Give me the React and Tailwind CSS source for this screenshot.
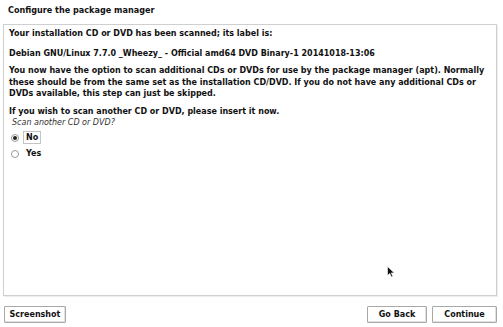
import React, { useState } from "react";

const font = { fontFamily: '"DejaVu Sans", Verdana, sans-serif' };

function Radio({ checked, label, focused, onClick }) {
  return (
    <div className="flex items-center gap-[4px] h-[16px] cursor-default" onClick={onClick}>
      <span className="w-[8px] h-[8px] rounded-full border border-[#9a9a9a] bg-white flex items-center justify-center">
        {checked && <span className="w-[4px] h-[4px] rounded-full bg-[#222]" />}
      </span>
      <span
        className={
          "px-[2px] leading-[11px] " +
          (focused ? "border border-[#c4c4c4]" : "border border-transparent")
        }
      >
        {label}
      </span>
    </div>
  );
}

function Btn({ children, className = "" }) {
  return (
    <button
      className={
        "h-[17px] border border-[#a8a8a8] bg-white rounded-[1px] font-bold text-[8px] text-[#111] shadow-[inset_-1px_-1px_0_#e2e2e2] " +
        className
      }
    >
      {children}
    </button>
  );
}

export default function App() {
  const [scan, setScan] = useState("no");

  return (
    <div className="relative w-[503px] h-[327px] bg-white text-[#111] flex flex-col overflow-hidden" style={font}>
      {/* title */}
      <div className="h-[24px] pl-[8px] pt-[5px] font-bold text-[8.1px] leading-[10px]">
        Configure the package manager
      </div>

      {/* panel */}
      <div className="mx-[3px] w-[494px] h-[272px] border border-[#cfcfcf] shadow-[1px_1px_0_#ececec] px-[5px] pt-[3px] font-bold text-[8px] leading-[11px]">
        <p>Your installation CD or DVD has been scanned; its label is:</p>
        <p className="mt-[9px]">Debian GNU/Linux 7.7.0 _Wheezy_ - Official amd64 DVD Binary-1 20141018-13:06</p>
        <p className="mt-[6px] leading-[11.5px]">
          You now have the option to scan additional CDs or DVDs for use by the package manager (apt). Normally
          these should be from the same set as the installation CD/DVD. If you do not have any additional CDs or
          DVDs available, this step can just be skipped.
        </p>
        <p className="mt-[6px]">If you wish to scan another CD or DVD, please insert it now.</p>
        <p className="pl-[3px] italic font-normal text-[#333]">Scan another CD or DVD?</p>
        <div className="mt-[2px] pl-[2px] flex flex-col">
          <Radio checked={scan === "no"} focused label="No" onClick={() => setScan("no")} />
          <Radio checked={scan === "yes"} label="Yes" onClick={() => setScan("yes")} />
        </div>
      </div>

      {/* footer */}
      <div className="flex items-center px-[4px] pt-[10px]">
        <Btn className="w-[62px]">Screenshot</Btn>
        <div className="flex-1" />
        <Btn className="w-[60px] mr-[5px]">Go Back</Btn>
        <Btn className="w-[65px] mr-[2px]">Continue</Btn>
      </div>

      {/* mouse pointer */}
      <svg className="absolute left-[387px] top-[266px]" width="8" height="12" viewBox="0 0 8 12">
        <path d="M0.5 0.5 L0.5 9.5 L2.8 7.4 L4.4 11 L5.8 10.4 L4.3 6.9 L7.3 6.9 Z" fill="#111" stroke="#fff" strokeWidth="0.6" />
      </svg>
    </div>
  );
}
